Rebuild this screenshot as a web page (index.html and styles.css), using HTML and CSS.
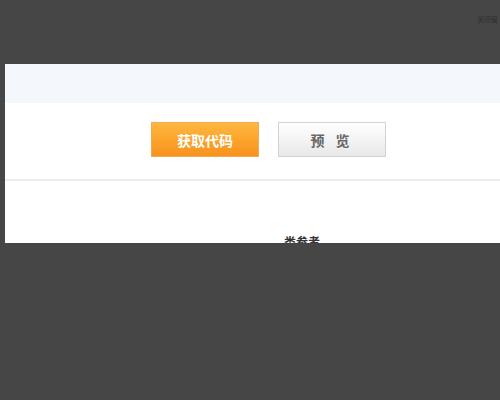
FILE: index.html
```html
<!DOCTYPE html>
<html lang="zh">
<head>
    <meta charset="UTF-8">
    <title>获取代码</title>
    <link rel="stylesheet" href="styles.css">
</head>
<body>
    <div class="topbar">
        <span class="close-tip">关闭窗</span>
    </div>

    <div class="panel">
        <div class="panel-head"></div>
        <div class="actions">
            <button class="btn btn-get">获取代码</button>
            <button class="btn btn-preview">预 览</button>
        </div>
        <div class="refs">
            <p class="refs-title">类参考</p>
        </div>
    </div>
</body>
</html>
```

FILE: styles.css
```css
html, body {
    margin: 0;
    padding: 0;
}
body {
    background-color: #464646;
    font-family: "Noto Sans CJK SC", "Liberation Sans", sans-serif;
    height: 400px;
    overflow: hidden;
}
.topbar {
    height: 64px;
    display: flex;
    justify-content: flex-end;
    align-items: flex-start;
}
.close-tip {
    font-size: 7px;
    line-height: 8px;
    color: #2e2e2e;
    margin: 15px 2px 0 0;
}
.panel {
    margin-left: 5px;
    width: 495px;
    height: 179px;
    background-color: #fff;
    overflow: hidden;
}
.panel-head {
    height: 39px;
    background-color: #f4f7fb;
}
.actions {
    display: flex;
    gap: 19px;
    padding: 19px 0 0 146px;
    height: 57px;
    box-sizing: content-box;
    border-bottom: 2px solid #ececec;
}
.btn {
    width: 108px;
    height: 35px;
    font-family: "Noto Sans CJK SC", sans-serif;
    font-size: 14px;
    font-weight: bold;
    cursor: pointer;
    padding: 0;
}
.btn-get {
    background: linear-gradient(#ffb73f, #f7921c);
    border: 1px solid #f3a95a;
    color: #fff;
}
.btn-preview {
    background: linear-gradient(#ffffff, #e8e8e8);
    border: 1px solid #d2d2d2;
    color: #666;
    letter-spacing: 4px;
}
.refs {
    padding: 52px 0 0 279px;
}
.refs-title {
    margin: 0;
    font-size: 12px;
    font-weight: bold;
    color: #333;
}
```
